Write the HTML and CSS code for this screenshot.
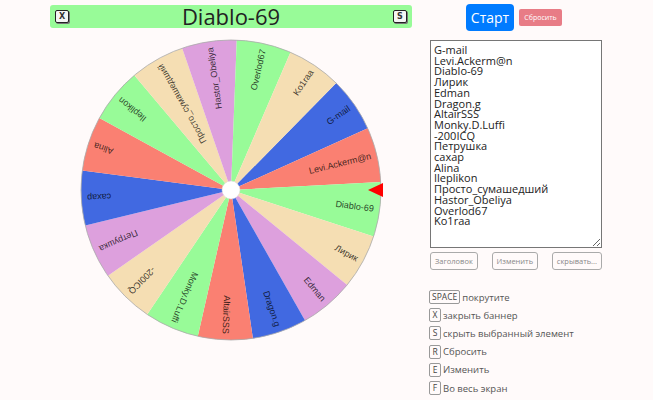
FILE: index.html
```html
<!DOCTYPE html>
<html lang="ru">
<head>
<meta charset="UTF-8">
<title>Колесо фортуны</title>
<link rel="stylesheet" href="styles.css">
</head>
<body>
<div id="container">
<div id="wheel-side">
<div id="banner">
<kbd class="banner-key">X</kbd>
<span id="winner">Diablo-69</span>
<kbd class="banner-key">S</kbd>
</div>
<svg id="wheel" width="320" height="310" viewBox="-160 -155 320 310"></svg>
</div>
<div id="panel">
<div class="top-buttons">
<button class="btn-start">Старт</button>
<button class="btn-reset">Сбросить</button>
</div>
<textarea id="names" spellcheck="false">G-mail
Levi.Ackerm@n
Diablo-69
Лирик
Edman
Dragon.g
AltairSSS
Monky.D.Luffi
-200ICQ
Петрушка
сахар
Alina
Ileplikon
Просто_сумашедший
Hastor_Obeliya
Overlod67
Ko1raa</textarea>
<div class="list-buttons">
<button>Заголовок</button>
<button>Изменить</button>
<button>скрывать...</button>
</div>
<ul class="shortcuts">
<li><kbd>SPACE</kbd> покрутите</li>
<li><kbd>X</kbd> закрыть баннер</li>
<li><kbd>S</kbd> скрыть выбранный элемент</li>
<li><kbd>R</kbd> Сбросить</li>
<li><kbd>E</kbd> Изменить</li>
<li><kbd>F</kbd> Во весь экран</li>
</ul>
</div>
</div>
<script src="wheel.js"></script>
</body>
</html>
```

FILE: styles.css
```css
body {
margin: 0;
background-color: #fffafa;
color: #333;
font-family: "Open Sans", "Noto Sans", sans-serif;
}
#container {
display: flex;
}
#wheel-side {
width: 398px;
padding-left: 32px;
display: flex;
flex-direction: column;
align-items: center;
}
#banner {
width: 362px;
height: 23px;
margin-top: 5px;
background-color: #98fb98;
border-radius: 3px;
display: flex;
align-items: center;
justify-content: space-between;
padding: 0 5px;
box-sizing: border-box;
}
#winner {
font-size: 22px;
line-height: 23px;
color: #222;
}
.banner-key {
width: 14px;
height: 13px;
box-sizing: border-box;
border: 1px solid #222;
border-radius: 2px;
background-color: #f4f4f4;
box-shadow: 1px 1px 0 #777;
font-family: "DejaVu Sans", sans-serif;
font-size: 8px;
font-weight: bold;
line-height: 11px;
text-align: center;
}
#wheel {
margin-top: 7px;
}
#wheel text {
font-family: "Liberation Sans", Arial, sans-serif;
font-size: 9px;
fill: rgba(0, 0, 0, 0.75);
}
#panel {
width: 172px;
display: flex;
flex-direction: column;
}
.top-buttons {
display: flex;
align-items: center;
padding-left: 36px;
margin-top: 4px;
height: 27px;
}
.btn-start {
width: 48px;
height: 27px;
background-color: #007bff;
color: #fff;
border: none;
border-radius: 4px;
font-family: inherit;
font-size: 14px;
padding: 0;
}
.btn-reset {
width: 43px;
height: 17px;
margin-left: 5px;
background-color: #e87c86;
color: #fff;
border: none;
border-radius: 2px;
font-family: inherit;
font-size: 7px;
padding: 0;
}
#names {
margin-top: 9px;
width: 172px;
height: 208px;
box-sizing: border-box;
border: 1px solid #767676;
padding: 4px 3px;
font-family: "Open Sans", "Noto Sans", sans-serif;
font-size: 11px;
line-height: 10.7px;
color: #222;
background-color: #fff;
overflow-y: scroll;
resize: vertical;
}
.list-buttons {
display: flex;
justify-content: space-between;
margin-top: 4px;
}
.list-buttons button {
height: 18px;
padding: 0 4px;
min-width: 45px;
background-color: #fffafa;
border: 1px solid #aaa;
border-radius: 3px;
color: #888;
font-family: inherit;
font-size: 7.5px;
}
.shortcuts {
list-style: none;
margin: 18px 0 0 -1px;
padding: 0;
}
.shortcuts li {
height: 18.2px;
display: flex;
align-items: center;
font-size: 9.5px;
color: #555;
}
.shortcuts kbd {
min-width: 12px;
height: 14px;
box-sizing: border-box;
padding: 0 2px;
margin-right: 2px;
border: 1px solid #999;
border-radius: 2px;
font-family: "Open Sans", sans-serif;
font-size: 8.5px;
line-height: 12px;
text-align: center;
color: #444;
}
```

FILE: wheel.js
```js
// Имена и цвета секторов, по часовой стрелке
const names = ['G-mail', 'Levi.Ackerm@n', 'Diablo-69', 'Лирик', 'Edman', 'Dragon.g',
    'AltairSSS', 'Monky.D.Luffi', '-200ICQ', 'Петрушка', 'сахар', 'Alina', 'Ileplikon',
    'Просто_сумашедший', 'Hastor_Obeliya', 'Overlod67', 'Ko1raa'];
const colors = ['#4169e1', '#fa8072', '#98fb98', '#f5deb3', '#dda0dd',
    '#4169e1', '#fa8072', '#98fb98', '#f5deb3', '#dda0dd',
    '#4169e1', '#fa8072', '#98fb98', '#f5deb3', '#dda0dd',
    '#98fb98', '#f5deb3'];

const svgNS = 'http://www.w3.org/2000/svg';
const R = 150;
const step = 360 / names.length;
// текущий поворот колеса: Diablo-69 под стрелкой
let rotation = -3.1 - 2 * step;

function polar(deg, r) {
    const a = deg * Math.PI / 180;
    return [(r * Math.cos(a)).toFixed(2), (r * Math.sin(a)).toFixed(2)];
}

function el(tag, attrs) {
    const node = document.createElementNS(svgNS, tag);
    for (const k in attrs) node.setAttribute(k, attrs[k]);
    return node;
}

function drawWheel() {
    const svg = document.getElementById('wheel');
    svg.innerHTML = '';
    names.forEach(function (name, i) {
        const a1 = rotation + i * step;
        const a2 = a1 + step;
        const p1 = polar(a1, R);
        const p2 = polar(a2, R);
        svg.appendChild(el('path', {
            d: 'M0 0 L' + p1[0] + ' ' + p1[1] + ' A' + R + ' ' + R + ' 0 0 1 ' + p2[0] + ' ' + p2[1] + ' Z',
            fill: colors[i]
        }));
        const label = el('text', {
            x: R - 6,
            y: 0,
            'text-anchor': 'end',
            'dominant-baseline': 'central',
            transform: 'rotate(' + (a1 + step / 2).toFixed(2) + ')'
        });
        label.textContent = name;
        svg.appendChild(label);
    });
    // обод, центр и стрелка
    svg.appendChild(el('circle', { r: R, fill: 'none', stroke: '#aaa', 'stroke-width': 0.8 }));
    svg.appendChild(el('circle', { r: 9, fill: '#fff', stroke: '#ddd', 'stroke-width': 0.5 }));
    svg.appendChild(el('polygon', { points: '137,0 152,-7 152,7', fill: '#f00' }));
}

drawWheel();
```
